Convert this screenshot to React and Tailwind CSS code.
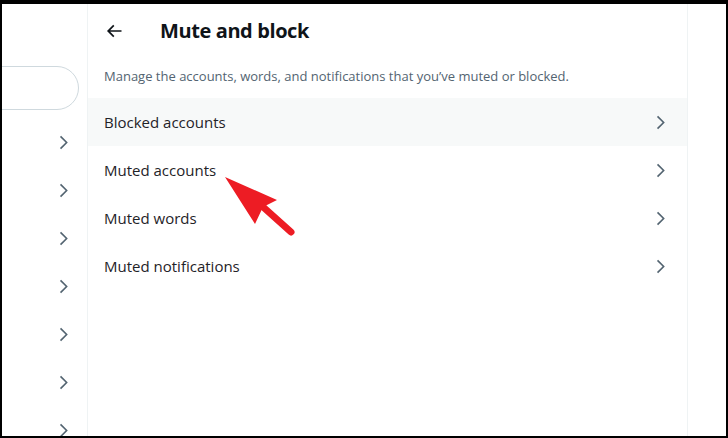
import React from "react";

const Chevron = ({ className = "" }) => (
  <svg viewBox="0 0 24 24" className={className} fill="#536471">
    <path d="M14.586 12L7.543 4.96l1.414-1.42L17.414 12l-8.457 8.46-1.414-1.42L14.586 12z" />
  </svg>
);

const rows = ["Blocked accounts", "Muted accounts", "Muted words", "Muted notifications"];

export default function App() {
  return (
    <div
      className="w-[728px] h-[438px] bg-black pt-[4px] px-[2px] pb-[2px] overflow-hidden"
      style={{ fontFamily: '"Open Sans", "Noto Sans", sans-serif' }}
    >
      <div className="relative flex h-full bg-white overflow-hidden">
        {/* left column */}
        <div className="w-[86px] shrink-0 border-r border-[#eff3f4] flex flex-col">
          <div className="h-[62px] shrink-0" />
          <div className="shrink-0 ml-[-40px] mr-[8px] h-[44px] rounded-full border border-[#cfd9de]" />
          <div className="shrink-0 flex flex-col pt-[8px]">
            {[0, 1, 2, 3, 4, 5, 6].map((i) => (
              <div key={i} className="shrink-0 h-[48px] flex items-center justify-end pr-[14px]">
                <Chevron className="w-[19px] h-[19px]" />
              </div>
            ))}
          </div>
        </div>
        {/* main column */}
        <div className="w-[600px] shrink-0 border-r border-[#eff3f4] flex flex-col">
          <div className="h-[54px] shrink-0 flex items-center px-[16px]">
            <div className="w-[56px] flex items-center">
              <svg viewBox="0 0 24 24" className="w-[20px] h-[20px]" fill="#0f1419">
                <path d="M7.414 13l5.043 5.04-1.414 1.42L3.586 12l7.457-7.46 1.414 1.42L7.414 11H21v2H7.414z" />
              </svg>
            </div>
            <h2 className="text-[20px] font-bold text-[#0f1419] leading-[24px] tracking-[-0.4px]">Mute and block</h2>
          </div>
          <p className="px-[16px] pt-[10px] pb-[14px] text-[13px] leading-[16px] text-[#536471]">
            Manage the accounts, words, and notifications that you’ve muted or blocked.
          </p>
          <div className="flex flex-col">
            {rows.map((r, i) => (
              <div
                key={r}
                className={`shrink-0 h-[48px] flex items-center justify-between pl-[16px] pr-[17px] ${i === 0 ? "bg-[#f7f9f9]" : ""}`}
              >
                <span className="text-[15px] text-[#1f2328]">{r}</span>
                <Chevron className="w-[19px] h-[19px]" />
              </div>
            ))}
          </div>
        </div>
        <div className="flex-1" />
        {/* red annotation arrow */}
        <svg className="absolute left-0 top-0 pointer-events-none" width="724" height="432" viewBox="0 0 724 432">
          <g transform="translate(-2,-4)">
            <line x1="262" y1="206" x2="291" y2="232" stroke="#ed1c24" strokeWidth="7" strokeLinecap="round" />
            <polygon points="225,177 277,200 263,207 255,224" fill="#ed1c24" />
          </g>
        </svg>
      </div>
    </div>
  );
}
